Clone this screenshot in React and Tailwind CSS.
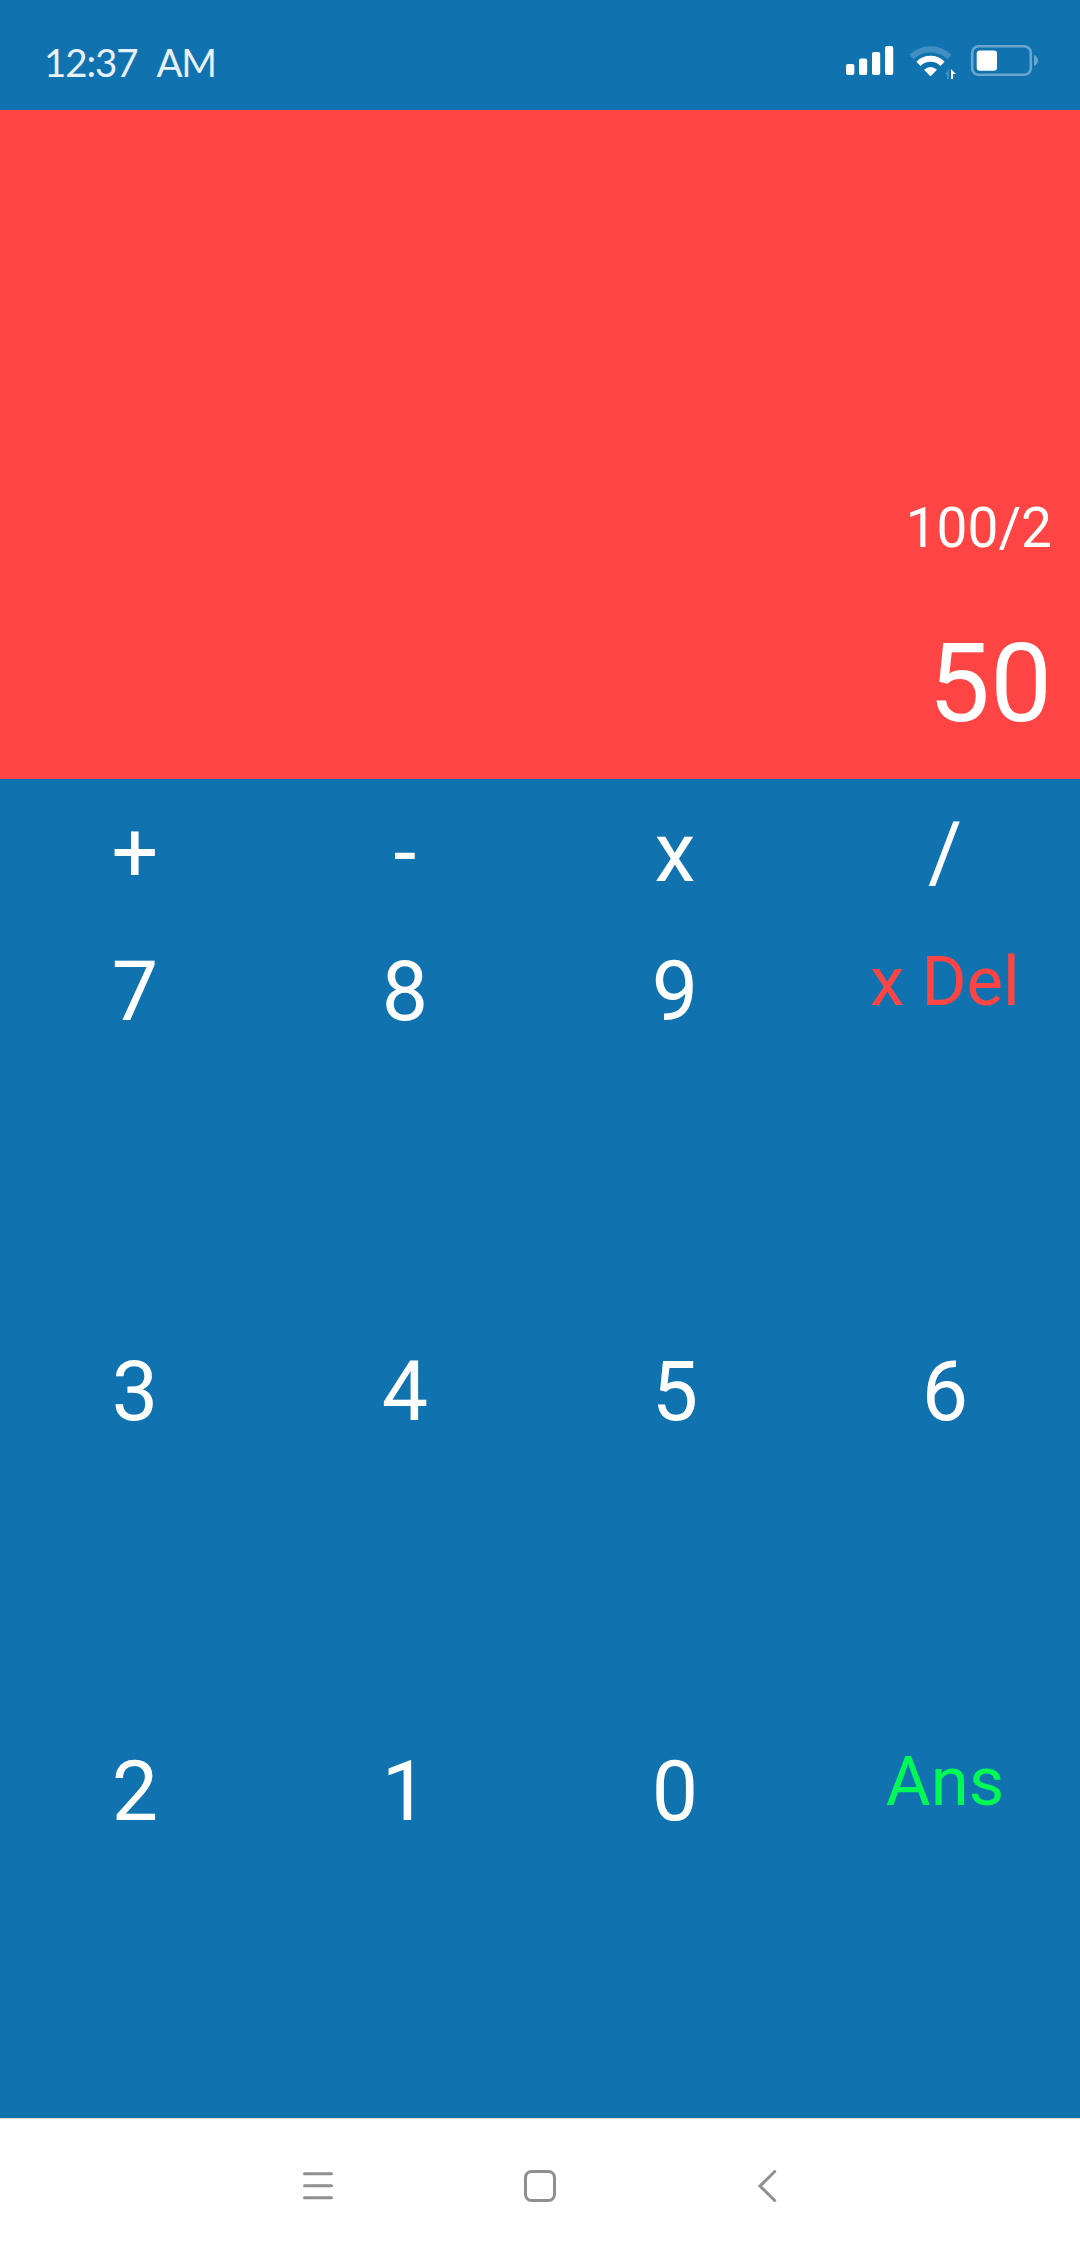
const rows = [
  { cls: 'h-[110px] pt-[25px]', keys: ['+', '-', 'x', '/'] },
  { cls: 'h-[400px] pt-[54px]', keys: ['7', '8', '9', 'x Del'] },
  { cls: 'h-[400px] pt-[54px]', keys: ['3', '4', '5', '6'] },
  { cls: 'h-[400px] pt-[54px]', keys: ['2', '1', '0', 'Ans'] },
];

const accent = {
  'x Del': 'text-[68.75px] text-[#ff4444] leading-[77px]',
  Ans: 'text-[68.75px] text-[#00fa55] leading-[77px]',
};

function StatusBar() {
  return (
    <header className="flex h-[110px] shrink-0 items-start justify-between pl-[44px] pr-[40px] pt-[37px] text-[#e8f0f9]">
      <div className="flex gap-[19px] font-[Lato] text-[38.5px] leading-[50px]">
        <span className="tracking-[-1.1px]">12:37</span>
        <span className="tracking-[-1.2px]">AM</span>
      </div>
      <svg className="mt-[3px]" width="198" height="42" viewBox="842 40 198 42" fill="none">
        <g fill="#fff">
          <rect x="846" y="64" width="8.4" height="11" rx="2" />
          <rect x="859" y="58.5" width="8.2" height="16.5" rx="2" />
          <rect x="872" y="52" width="8.2" height="23" rx="2" />
          <rect x="885" y="46" width="8.2" height="29" rx="2" />
        </g>
        <path d="M911.6 56.9A27 27 0 0 1 949.4 56.9" stroke="#418ec1" strokeWidth="6" />
        <path d="M918.5 63.8A17 17 0 0 1 942.5 63.8" stroke="#fff" strokeWidth="6" />
        <path d="M924 69.7Q930.5 64.4 937 69.7L931.2 75.7Q930.5 76.3 929.8 75.7Z" fill="#fff" />
        <path d="M949 69V79H947V75L945 74Z" fill="#418ec1" />
        <path d="M951 69L956 74H953V79H951Z" fill="#fff" />
        <rect x="972.2" y="46.2" width="58.6" height="28.6" rx="6.5" stroke="#6ba6ce" strokeWidth="2.6" />
        <rect x="976.7" y="50.5" width="20.3" height="20.3" rx="3" fill="#fff" />
        <path d="M1034 55Q1038 57 1038 60.5T1034 66Z" fill="#6ba6ce" />
      </svg>
    </header>
  );
}

export default function App() {
  return (
    <div className="flex h-[2248px] w-[1080px] flex-col overflow-hidden bg-[#1172b0] font-[Roboto] text-white">
      <StatusBar />
      <section className="flex h-[669px] shrink-0 flex-col items-end bg-[#ff4444] pr-[28px] pt-[385px]">
        <div className="text-[55px] leading-[66px]">100/2</div>
        <div className="mt-[58px] text-[110px] leading-[129px]">50</div>
      </section>
      <main className="flex-1">
        {rows.map((row) => (
          <div key={row.keys[0]} className={`grid grid-cols-4 ${row.cls}`}>
            {row.keys.map((key) => (
              <button key={key} className={`self-start text-center ${accent[key] || 'text-[82.5px] leading-[97px]'}`}>
                {key}
              </button>
            ))}
          </div>
        ))}
      </main>
      <nav className="flex h-[130px] shrink-0 border-t border-[#dfdfdf] bg-white">
        <svg width="1080" height="129" viewBox="0 2119 1080 129" fill="none" stroke="#8f8f8f" strokeWidth="3" strokeLinecap="round">
          <path d="M304.5 2173.7h27M304.5 2185.7h27M304.5 2197.7h27" />
          <rect x="525.5" y="2171.5" width="29" height="29" rx="6" />
          <path d="M774.7 2171.5l-14.7 14.5 14.7 14.5" />
        </svg>
      </nav>
    </div>
  );
}
